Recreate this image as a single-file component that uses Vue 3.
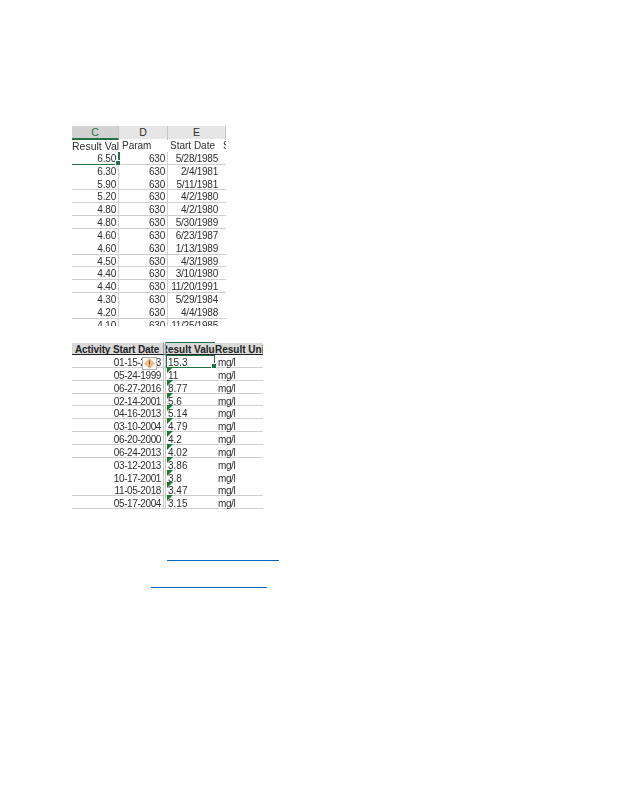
<script setup>
const firstRows = [
  ['6.50', '5/28/1985', true], ['6.30', '2/4/1981', false], ['5.90', '5/11/1981', true],
  ['5.20', '4/2/1980', true], ['4.80', '4/2/1980', true], ['4.80', '5/30/1989', true],
  ['4.60', '6/23/1987', false], ['4.60', '1/13/1989', true], ['4.50', '4/3/1989', true],
  ['4.40', '3/10/1980', true], ['4.40', '11/20/1991', true], ['4.30', '5/29/1984', false],
  ['4.20', '4/4/1988', true], ['4.10', '11/25/1985', true]
].map(([value, date, line]) => ({ value, date, line }))

const secondRows = [
  ['01-15-2013', '15.3', true], ['05-24-1999', '11', true], ['06-27-2016', '8.77', true],
  ['02-14-2001', '5.6', true], ['04-16-2013', '5.14', true], ['03-10-2004', '4.79', true],
  ['06-20-2000', '4.2', true], ['06-24-2013', '4.02', true], ['03-12-2013', '3.86', false],
  ['10-17-2001', '3.8', false], ['11-05-2018', '3.47', true], ['05-17-2004', '3.15', true]
].map(([date, value, line]) => ({ date, value, line }))
</script>

<template>
  <main class="page">
    <section class="sheet-one">
      <div class="col-heads">
        <div class="col-head selected">C</div>
        <div class="col-head">D</div>
        <div class="col-head">E</div>
      </div>
      <div class="row-one title-row">
        <div class="cell-text result">Result Val</div>
        <div class="cell-text param">Param</div>
        <div class="cell-text start">Start Date</div>
        <div class="cell-text extra">S</div>
      </div>
      <div
        v-for="(row, i) in firstRows"
        :key="i"
        class="row-one"
        :class="{ lined: row.line, active: i === 0 }"
      >
        <div class="cell-num first-col">{{ row.value }}<i v-if="i === 0" class="handle"></i></div>
        <div class="cell-num">630</div>
        <div class="cell-num date">{{ row.date }}</div>
        <div></div>
      </div>
    </section>

    <section class="sheet-two">
      <div class="head-row">
        <div class="head-cell first-head">Activity Start Date</div>
        <div class="head-cell centered"><span>Result Value</span></div>
        <div class="head-cell">Result Unit</div>
      </div>
      <div
        v-for="(row, i) in secondRows"
        :key="i"
        class="row-two"
        :class="{ lined: row.line, active: i === 0 }"
      >
        <div class="date-cell">{{ row.date }}</div>
        <div class="value-cell">
          <i v-if="i > 0" class="flag"></i>{{ row.value }}<i v-if="i === 0" class="handle"></i>
        </div>
        <div class="unit-cell">mg/l</div>
        <svg v-if="i === 0" class="warn" viewBox="0 0 15 13" width="15" height="13">
          <rect x="0.5" y="0.5" width="14" height="12" fill="#fff" stroke="#b4b4b4" />
          <path d="M7.5 1 L13 6.5 L7.5 12 L2 6.5 Z" fill="#eebd85" />
          <path d="M7 3.5 H8 V7.5 H7 Z M7 8.5 H8 V9.5 H7 Z" fill="#6b4a20" />
        </svg>
      </div>
    </section>

    <a class="link first-link" href="#"></a>
    <a class="link second-link" href="#"></a>
  </main>
</template>

<style scoped>
.page {
  box-sizing: border-box;
  width: 618px;
  height: 800px;
  padding: 126px 0 0 72px;
  overflow: hidden;
  background: #fff;
  color: #2f2f2f;
  font-family: "Liberation Sans", Arial, sans-serif;
  font-size: 10px;
}

.sheet-one {
  width: 154px;
  height: 200px;
  overflow: hidden;
  filter: blur(0.35px);
}

.col-heads {
  display: grid;
  grid-template-columns: 47px 49px 58px;
  height: 13px;
  background: #e6e6e6;
}

.col-head {
  box-sizing: border-box;
  border-right: 1px solid #c4c4c4;
  text-align: center;
  font-size: 10.5px;
  line-height: 12px;
}

.col-head.selected {
  background: #d2d2d2;
  border-bottom: 2px solid #217346;
  color: #217346;
}

.row-one {
  box-sizing: border-box;
  display: grid;
  grid-template-columns: 47px 49px 52px 6px;
  height: 12.85px;
  line-height: 14px;
  white-space: nowrap;
  position: relative;
}

.row-one.lined,
.row-two.lined {
  border-bottom: 1px solid #cfcfcf;
}

.cell-text {
  overflow: hidden;
  height: 13px;
}

.cell-text.result {
  font-size: 10.5px;
}

.cell-text.param {
  padding-left: 3px;
}

.cell-text.start {
  padding-left: 2px;
}

.cell-text.extra {
  padding-left: 3px;
}

.cell-num {
  box-sizing: border-box;
  border-right: 1px solid #d2d2d2;
  padding-right: 2px;
  text-align: right;
  position: relative;
  letter-spacing: -0.2px;
}

.cell-num.date {
  border-right: 0;
  letter-spacing: -0.25px;
}

.row-one.active {
  border-bottom: 0;
}

.row-one.active .first-col {
  width: 48px;
  height: 13px;
  border-right: 2px solid #217346;
  border-bottom: 1px solid #217346;
}

.row-one.active::after {
  content: "";
  position: absolute;
  left: 48px;
  right: 0;
  top: 12px;
  height: 1px;
  background: #cfcfcf;
}

.handle {
  position: absolute;
  right: -3px;
  bottom: -2px;
  width: 4px;
  height: 4px;
  background: #217346;
  border: 1px solid #fff;
  z-index: 2;
}

.sheet-two {
  width: 191px;
  height: 167px;
  margin-top: 16px;
  overflow: hidden;
  filter: blur(0.35px);
}

.head-row {
  display: grid;
  grid-template-columns: 94px 49px 48px;
  height: 13px;
  font-weight: 700;
  font-size: 10px;
  line-height: 14px;
  color: #222;
  white-space: nowrap;
}

.head-cell {
  box-sizing: border-box;
  overflow: hidden;
  background: #d9d9d9;
  border-top: 1px solid #fff;
  border-bottom: 1px solid #222;
}

.first-head {
  padding-left: 3px;
  border-right: 3px double #9a9a9a;
  letter-spacing: -0.1px;
}

.head-cell.centered {
  display: flex;
  justify-content: center;
  border-top-color: #217346;
}

.row-two {
  box-sizing: border-box;
  display: grid;
  grid-template-columns: 94px 49px 48px;
  height: 12.85px;
  line-height: 16px;
  font-size: 10px;
  position: relative;
}

.date-cell {
  box-sizing: border-box;
  height: 13px;
  padding-right: 2px;
  text-align: right;
  border-right: 3px double #c8c8c8;
  letter-spacing: -0.4px;
}

.value-cell {
  position: relative;
  padding-left: 2px;
}

.row-two.active .value-cell {
  box-sizing: border-box;
  border: 1px solid #217346;
  height: 13px;
  padding-left: 1px;
  line-height: 14px;
}

.flag {
  position: absolute;
  left: 1px;
  top: -1px;
  width: 0;
  height: 0;
  border-top: 6px solid #1a7a2c;
  border-right: 6px solid transparent;
}

.unit-cell {
  padding-left: 3px;
  letter-spacing: -0.4px;
}

.warn {
  position: absolute;
  left: 70px;
  top: 2px;
}

.link {
  display: block;
  height: 1px;
  background: #0563c1;
}

.first-link {
  width: 112px;
  margin: 51px 0 0 95px;
}

.second-link {
  width: 116px;
  margin: 26px 0 0 79px;
}
</style>

<style>
html, body {
  margin: 0;
  background: #fff;
}
</style>
